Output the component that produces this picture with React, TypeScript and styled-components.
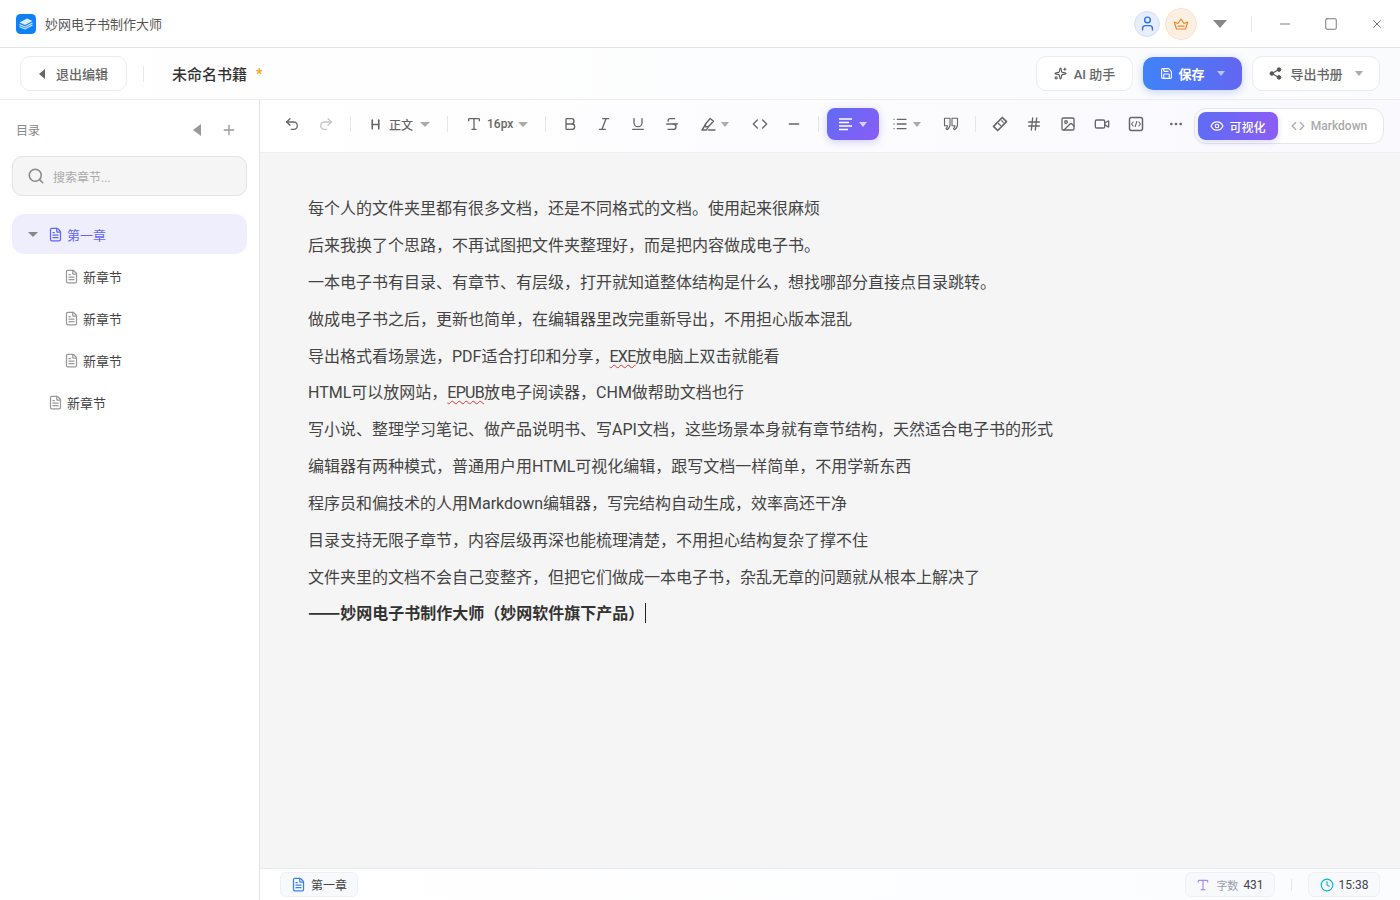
import React from 'react';
import styled, { createGlobalStyle } from 'styled-components';
import {
  Undo2, Redo2, Heading, Type, Bold, Italic, Underline, Strikethrough, Code, Minus, List,
  Hash, Image, Video, MoreHorizontal, Eye, Save, Sparkles, User, Search, FileText, Plus, Square, X, Clock,
} from 'lucide-react';

const GlobalStyle = createGlobalStyle`
  html, body { margin: 0; padding: 0; height: 100%; overflow: hidden; background: #fff; }
  body { font-family: Roboto, "Noto Sans CJK SC", sans-serif; color: #333; }
  #root { height: 100%; }
  * { box-sizing: border-box; }
`;

const Page = styled.div`display: flex; flex-direction: column; height: 900px; width: 1400px;`;

const TitleBar = styled.header`
  height: 48px; flex: none; display: flex; align-items: center; padding-left: 16px;
  background: #fff; border-bottom: 1px solid #e4e4e4;
`;
const AppName = styled.span`margin-left: 9px; font-size: 13px; color: #555;`;
const TitleRight = styled.div`margin-left: auto; display: flex; align-items: center;`;
const Avatar = styled.div<{ $size: number; $bg: string; $border: string; $color: string; $gap: number }>`
  width: ${p => p.$size}px; height: ${p => p.$size}px; border-radius: 50%;
  margin-left: ${p => p.$gap}px; background: ${p => p.$bg}; border: 1px solid ${p => p.$border};
  color: ${p => p.$color}; display: flex; align-items: center; justify-content: center;
`;
const Caret = styled.span<{ $w?: number; $h?: number; $color?: string; $dir?: 'down' | 'left' }>`
  display: inline-block; flex: none; width: 0; height: 0;
  ${p => p.$dir === 'left'
    ? `border-top: ${(p.$w ?? 10) / 2}px solid transparent; border-bottom: ${(p.$w ?? 10) / 2}px solid transparent; border-right: ${p.$h ?? 5}px solid ${p.$color ?? '#999'};`
    : `border-left: ${(p.$w ?? 10) / 2}px solid transparent; border-right: ${(p.$w ?? 10) / 2}px solid transparent; border-top: ${p.$h ?? 5}px solid ${p.$color ?? '#999'};`}
`;
const MenuCaret = styled.div`margin-left: 16px; width: 14px; display: flex; justify-content: center;`;
const TitleSep = styled.div`width: 1px; height: 16px; background: #e8e8e8; margin: 0 10px 0 24px;`;
const WinButton = styled.div`width: 46px; height: 47px; display: flex; align-items: center; justify-content: center; color: #777;`;

const ActionBar = styled.div`
  height: 52px; flex: none; display: flex; align-items: center; padding: 0 20px;
  background: linear-gradient(90deg, #fff, #fafbfd); border-bottom: 1px solid #ececec;
`;
const OutlineButton = styled.div<{ $w: number; $gap?: number }>`
  width: ${p => p.$w}px; height: 35px; border: 1px solid #ececec; border-radius: 10px; background: #fff;
  display: flex; align-items: center; justify-content: center; gap: ${p => p.$gap ?? 7}px;
  font-size: 13px; font-weight: 500; color: #666;
`;
const ActionSep = styled.div`width: 1px; height: 16px; background: #e8e8e8; margin: 0 28px 0 16px;`;
const BookTitle = styled.div`font-size: 15px; font-weight: 500; color: #333;`;
const Modified = styled.span`margin-left: 9px; font-size: 14px; font-weight: 700; color: #f5a623;`;
const ActionRight = styled.div`margin-left: auto; display: flex; align-items: center; gap: 10px;`;
const ExportCaret = styled.span`margin-left: 4px; display: flex;`;
const SaveButton = styled.div`
  width: 99px; height: 33px; border-radius: 10px; display: flex; align-items: center; justify-content: center; gap: 5px;
  background: linear-gradient(90deg, #3f83f8, #6366f1); color: #fff; font-size: 13px; font-weight: 700;
  box-shadow: 0 2px 8px rgba(79, 110, 247, .3);
`;
const SaveCaret = styled.span`margin-left: 7px; display: flex;`;

const Body = styled.div`flex: 1; display: flex; min-height: 0;`;
const Sidebar = styled.aside`width: 260px; flex: none; padding: 0 12px; background: #fff; border-right: 1px solid #e4e4e4;`;
const SideHeader = styled.div`height: 44px; margin-top: 8px; padding: 0 6px 0 4px; display: flex; align-items: center; gap: 8px;`;
const SideLabel = styled.span`font-size: 12px; color: #888; margin-right: auto; padding-bottom: 2px;`;
const SideIcon = styled.div`width: 24px; height: 24px; display: flex; align-items: center; justify-content: center; color: #999;`;
const SearchBox = styled.div`
  height: 40px; margin-top: 4px; padding-left: 14px; display: flex; align-items: center; gap: 8px;
  background: #f5f5f5; border: 1px solid #e4e4e4; border-radius: 10px;
  font-size: 12px; color: #aaa;
`;
const Tree = styled.div`margin-top: 18px; display: flex; flex-direction: column; gap: 2px;`;
const Row = styled.div<{ $depth: number; $active?: boolean }>`
  height: 40px; border-radius: 12px; display: flex; align-items: center; gap: 4px;
  padding-left: ${p => 16 + p.$depth * 16}px;
  background: ${p => (p.$active ? '#eeeefd' : 'transparent')};
  color: ${p => (p.$active ? '#6366f1' : '#444')};
  font-size: 13px;
  svg { color: ${p => (p.$active ? '#6366f1' : '#999')}; flex: none; }
`;
const CaretSlot = styled.span`width: 16px; display: flex; align-items: center;`;

const Editor = styled.main`flex: 1; min-width: 0; display: flex; flex-direction: column; background: #f5f5f5;`;
const Toolbar = styled.div`
  height: 53px; flex: none; display: flex; align-items: flex-start; padding: 8px 16px 0 18px;
  background: linear-gradient(90deg, #fff, #f9f9fe); border-bottom: 1px solid #eee; color: #666;
`;
const ToolGroup = styled.div`display: flex; gap: 6px;`;
const ToolSep = styled.div`width: 1px; height: 16px; margin: 8px 10px 0; background: #e6e6e6;`;
const ToolBtn = styled.div<{ $muted?: boolean }>`
  width: 28px; height: 32px; display: flex; align-items: center; justify-content: center;
  color: ${p => (p.$muted ? '#c4c4c4' : '#666')};
`;
const DropBtn = styled.div<{ $w: number; $gap: number; $pl?: number }>`
  width: ${p => p.$w}px; height: 32px; display: flex; align-items: center; gap: ${p => p.$gap}px;
  padding-left: ${p => p.$pl ?? 7}px; color: #666; font-size: 12px; font-weight: 500;
`;
const AlignBtn = styled.div`
  width: 52px; height: 32px; margin: 0 6px 0 -2px; border-radius: 8px; display: flex; align-items: center; padding-left: 11px; gap: 6px;
  background: linear-gradient(135deg, #5f6cf5, #8b5cf6); color: #fff;
  box-shadow: 0 2px 8px rgba(99, 102, 241, .3);
`;
const MoreBtn = styled(ToolBtn)`margin-left: 12px;`;
const ModeGroup = styled.div`
  margin-left: auto; height: 36px; padding: 3px; display: flex; border: 1px solid #e6e6ee; border-radius: 12px; background: #fff;
`;
const ModeActive = styled.div`
  width: 80px; height: 28px; border-radius: 8px; display: flex; align-items: center; justify-content: center; gap: 5px;
  background: linear-gradient(90deg, #5f6cf5, #8b5cf6); color: #fff; font-size: 12px; font-weight: 500;
  box-shadow: 0 2px 6px rgba(99, 102, 241, .25);
`;
const ModeIdle = styled.div`
  width: 102px; height: 28px; display: flex; align-items: center; justify-content: center; gap: 6px;
  color: #aaa; font-size: 12px; font-weight: 500;
`;

const Content = styled.div`flex: 1; padding: 43px 48px 0;`;
const Para = styled.p`margin: 0 0 11.3px; font-size: 16px; line-height: 25.6px; color: #444; white-space: nowrap;`;
const ClosingLine = styled(Para)`margin-top: -1px;`;
const Strong = styled.strong`font-weight: 700; color: #333;`;
const Dash = styled.span`font-family: "Noto Sans CJK SC", sans-serif; font-size: 19px; line-height: 1;`;
const Typo = styled.span`text-decoration: underline wavy #e53935 1px; text-underline-offset: 2px; letter-spacing: -.7px;`;
const Cursor = styled.span`display: inline-block; width: 1px; height: 20px; vertical-align: -4px; margin-left: 1px; background: #222;`;

const StatusBar = styled.footer`
  height: 32px; flex: none; display: flex; align-items: center; padding: 0 20px; 
  background: linear-gradient(90deg, #fff, #fbfcfe); border-top: 1px solid #e4ebf5;
`;
const Chip = styled.div<{ $w: number }>`
  width: ${p => p.$w}px; height: 25px; border-radius: 6px; background: #f7f9fc; border: 1px solid #edf0f5;
  display: flex; align-items: center; justify-content: center; gap: 5px; font-size: 12px; color: #444;
`;
const ChipLabel = styled.span`color: #9aa0ac; font-size: 11px; margin-left: 1px;`;
const StatusRight = styled.div`margin-left: auto; display: flex; align-items: center;`;
const StatusSep = styled.div`width: 1px; height: 12px; background: #e8e8e8; margin: 0 16px;`;

const Logo = () => (
  <svg width="20" height="20" viewBox="0 0 20 20">
    <rect width="20" height="20" rx="4.5" fill="#1080f5" />
    <path d="M3.5 8.5 11 4.5l5.5 2.5L9 11z" fill="#dbeeff" />
    <path d="M3.5 10.5 9 13l7.5-4M3.5 12.5 9 15l7.5-4" fill="none" stroke="#dbeeff" strokeWidth="1.1" />
  </svg>
);
const Crown = () => (
  <svg width="16" height="16" viewBox="0 0 16 16" fill="none" stroke="currentColor" strokeWidth="1.2" strokeLinejoin="round" strokeLinecap="round">
    <path d="M1.200 6 5 7.500 8 3l3 4.500L14.800 6 12.500 13h-9z" />
    <path d="M5 10.200h6" />
  </svg>
);
const Share = () => (
  <svg width="13" height="13" viewBox="0 0 13 13" fill="#555" stroke="#555">
    <circle cx="10" cy="2.6" r="1.8" /><circle cx="2.8" cy="6.5" r="1.8" /><circle cx="10" cy="10.4" r="1.8" />
    <path d="M10 2.6 2.8 6.5l7.2 3.9" fill="none" strokeWidth="1.1" />
  </svg>
);
const Quote = () => (
  <svg width="18" height="18" viewBox="0 0 18 18" fill="none" stroke="currentColor" strokeWidth="1.100" strokeLinejoin="round">
    <path d="M2.500 3.200h5.500v6.300c0 2.400-1 4.100-3 5.300l-1-1.300c1-.7 1.500-1.700 1.600-2.700H2.500z" />
    <path d="M10 3.200h5.500v6.300c0 2.400-1 4.100-3 5.300l-1-1.300c1-.7 1.500-1.700 1.600-2.700H10z" />
  </svg>
);
const LinkTag = () => (
  <svg width="16" height="16" viewBox="0 0 16 16" fill="none" stroke="currentColor" strokeWidth="1.700" strokeLinejoin="round">
    <path d="M10.300 1.500 14.500 5.700 5.700 14.500 1.500 10.300z" />
    <path d="M6.200 7.200 8.800 9.800M9.400 4.400l2.200 2.200" strokeWidth="1.300" />
  </svg>
);
const Marker = () => (
  <svg width="16" height="16" viewBox="0 0 16 16" fill="none" stroke="currentColor" strokeWidth="1.4" strokeLinejoin="round" strokeLinecap="round">
    <path d="M5.500 8 10.200 2.500 13.500 5.300 8.500 10.500l-3 .2z" />
    <path d="M5.500 8.500 2 14h4.500l2-3.500" />
    <path d="M8.500 14H15" />
  </svg>
);
const CodeBox = () => (
  <svg width="16" height="16" viewBox="0 0 16 16" fill="none" stroke="currentColor" strokeLinejoin="round" strokeLinecap="round">
    <rect x="1.500" y="1.500" width="13" height="13" rx="2" strokeWidth="1.500" />
    <path d="M5.200 6 3.500 8l1.700 2M10.800 6l1.700 2-1.700 2M8.800 5.500 7.200 10.500" strokeWidth="1.100" />
  </svg>
);
const AlignLines = () => (
  <svg width="15" height="14" viewBox="0 0 15 14" fill="none" stroke="currentColor" strokeWidth="1.600">
    <path d="M1 2h13M1 5.500h10M1 9h13M1 12.500h9" />
  </svg>
);

const lines: React.ReactNode[] = [
  '每个人的文件夹里都有很多文档，还是不同格式的文档。使用起来很麻烦',
  '后来我换了个思路，不再试图把文件夹整理好，而是把内容做成电子书。',
  '一本电子书有目录、有章节、有层级，打开就知道整体结构是什么，想找哪部分直接点目录跳转。',
  '做成电子书之后，更新也简单，在编辑器里改完重新导出，不用担心版本混乱',
  <>导出格式看场景选，PDF适合打印和分享，<Typo>EXE</Typo>放电脑上双击就能看</>,
  <>HTML可以放网站，<Typo>EPUB</Typo>放电子阅读器，CHM做帮助文档也行</>,
  '写小说、整理学习笔记、做产品说明书、写API文档，这些场景本身就有章节结构，天然适合电子书的形式',
  '编辑器有两种模式，普通用户用HTML可视化编辑，跟写文档一样简单，不用学新东西',
  '程序员和偏技术的人用Markdown编辑器，写完结构自动生成，效率高还干净',
  '目录支持无限子章节，内容层级再深也能梳理清楚，不用担心结构复杂了撑不住',
  '文件夹里的文档不会自己变整齐，但把它们做成一本电子书，杂乱无章的问题就从根本上解决了',
];

export default function App() {
  return (
    <Page>
      <GlobalStyle />
      <TitleBar>
        <Logo />
        <AppName>妙网电子书制作大师</AppName>
        <TitleRight>
          <Avatar $size={26} $gap={0} $bg="#e6eefc" $border="#d4e0f5" $color="#2f6fe0"><User size={17} /></Avatar>
          <Avatar $size={32} $gap={5} $bg="#fdf0e3" $border="#fbe2c8" $color="#e8872a"><Crown /></Avatar>
          <MenuCaret><Caret $w={14} $h={8} $color="#888" /></MenuCaret>
          <TitleSep />
          <WinButton><Minus size={16} strokeWidth={1.4} /></WinButton>
          <WinButton><Square size={14} strokeWidth={1.700} /></WinButton>
          <WinButton><X size={14} strokeWidth={1.700} /></WinButton>
        </TitleRight>
      </TitleBar>

      <ActionBar>
        <OutlineButton $w={107} $gap={11}><Caret $dir="left" $w={10} $h={6} $color="#666" />退出编辑</OutlineButton>
        <ActionSep />
        <BookTitle>未命名书籍</BookTitle>
        <Modified>*</Modified>
        <ActionRight>
          <OutlineButton $w={97}><Sparkles size={13} color="#555" />AI 助手</OutlineButton>
          <SaveButton><Save size={13} />保存<SaveCaret><Caret $w={9} $h={5} $color="#b9c4fb" /></SaveCaret></SaveButton>
          <OutlineButton $w={128} $gap={8}><Share />导出书册<ExportCaret><Caret $w={9} $h={5} $color="#aaa" /></ExportCaret></OutlineButton>
        </ActionRight>
      </ActionBar>

      <Body>
        <Sidebar>
          <SideHeader>
            <SideLabel>目录</SideLabel>
            <SideIcon><Caret $dir="left" $w={12} $h={8} $color="#999" /></SideIcon>
            <SideIcon><Plus size={16} /></SideIcon>
          </SideHeader>
          <SearchBox><Search size={18} color="#888" />搜索章节...</SearchBox>
          <Tree>
            <Row $depth={0} $active><CaretSlot><Caret $w={10} $h={5} $color="#888" /></CaretSlot><FileText size={15} />第一章</Row>
            <Row $depth={1}><CaretSlot /><FileText size={15} />新章节</Row>
            <Row $depth={1}><CaretSlot /><FileText size={15} />新章节</Row>
            <Row $depth={1}><CaretSlot /><FileText size={15} />新章节</Row>
            <Row $depth={0}><CaretSlot /><FileText size={15} />新章节</Row>
          </Tree>
        </Sidebar>

        <Editor>
          <Toolbar>
            <ToolGroup>
              <ToolBtn><Undo2 size={16} /></ToolBtn>
              <ToolBtn $muted><Redo2 size={16} /></ToolBtn>
            </ToolGroup>
            <ToolSep />
            <DropBtn $w={76} $gap={7} $pl={8}><Heading size={13} strokeWidth={3} />正文<Caret $w={10} $h={5} $color="#aaa" /></DropBtn>
            <ToolSep />
            <DropBtn $w={77} $gap={5} $pl={8}><Type size={16} />16px<Caret $w={10} $h={5} $color="#aaa" /></DropBtn>
            <ToolSep />
            <ToolGroup>
              <ToolBtn><Bold size={16} /></ToolBtn>
              <ToolBtn><Italic size={16} /></ToolBtn>
              <ToolBtn><Underline size={16} /></ToolBtn>
              <ToolBtn><Strikethrough size={16} /></ToolBtn>
              <DropBtn $w={48} $gap={5} $pl={8}><Marker /><Caret $w={9} $h={5} $color="#aaa" /></DropBtn>
              <ToolBtn><Code size={16} /></ToolBtn>
              <ToolBtn><Minus size={16} /></ToolBtn>
            </ToolGroup>
            <ToolSep />
            <AlignBtn><AlignLines /><Caret $w={9} $h={5} $color="#d8d4ff" /></AlignBtn>
            <ToolGroup>
              <DropBtn $w={46} $gap={5}><List size={16} /><Caret $w={9} $h={5} $color="#aaa" /></DropBtn>
              <ToolBtn><Quote /></ToolBtn>
            </ToolGroup>
            <ToolSep />
            <ToolGroup>
              <ToolBtn><LinkTag /></ToolBtn>
              <ToolBtn><Hash size={16} /></ToolBtn>
              <ToolBtn><Image size={16} /></ToolBtn>
              <ToolBtn><Video size={16} /></ToolBtn>
              <ToolBtn><CodeBox /></ToolBtn>
            </ToolGroup>
            <MoreBtn><MoreHorizontal size={16} /></MoreBtn>
            <ModeGroup>
              <ModeActive><Eye size={14} />可视化</ModeActive>
              <ModeIdle><Code size={14} />Markdown</ModeIdle>
            </ModeGroup>
          </Toolbar>

          <Content>
            {lines.map((line, i) => <Para key={i}>{line}</Para>)}
            <ClosingLine><Strong><Dash>——</Dash>妙网电子书制作大师（妙网软件旗下产品）</Strong><Cursor /></ClosingLine>
          </Content>

          <StatusBar>
            <Chip $w={78}><FileText size={15} color="#3b82f6" />第一章</Chip>
            <StatusRight>
              <Chip $w={90}><Type size={14} color="#a78bfa" /><ChipLabel>字数</ChipLabel>431</Chip>
              <StatusSep />
              <Chip $w={72}><Clock size={14} color="#06b6d4" />15:38</Chip>
            </StatusRight>
          </StatusBar>
        </Editor>
      </Body>
    </Page>
  );
}
